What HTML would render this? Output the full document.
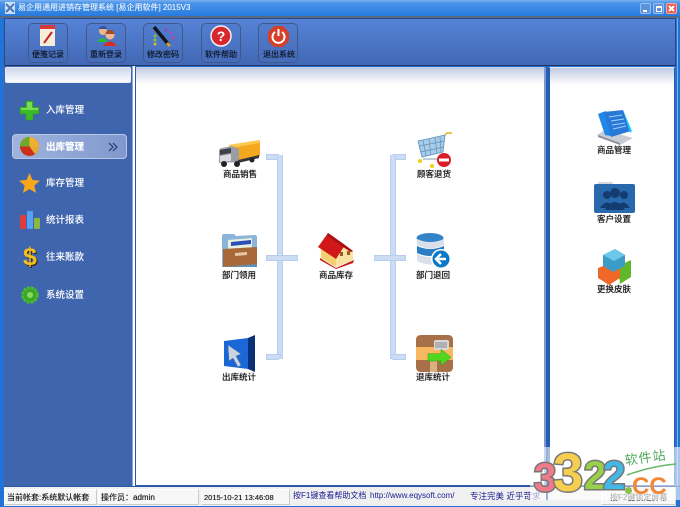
<!DOCTYPE html>
<html lang="zh"><head><meta charset="utf-8"><title>易企用通用进销存管理系统</title>
<style>
*{box-sizing:border-box}
html,body{margin:0;padding:0}
body{width:680px;height:507px;position:relative;overflow:hidden;background:#2174d6;font-family:"Liberation Sans","Noto Sans CJK SC",sans-serif;font-size:9px;color:#111}
.a{position:absolute}
.t{position:absolute;white-space:nowrap;line-height:12px}
.c{text-align:center;width:60px;font-size:8.5px;color:#111;text-shadow:0 0 .6px #111}
.s{color:#fff;font-size:9.5px;left:46px;text-shadow:0 0 .5px #fff}
.tb{position:absolute;top:23px;width:40px;height:40px;border:1px solid #41588c;border-radius:5px;background:rgba(80,115,190,.25)}
.tl{position:absolute;top:49px;font-size:8px;color:#101828;width:44px;text-align:center;white-space:nowrap;line-height:12px;text-shadow:0 0 .5px #101828}
.b{position:absolute;background:#cbdcf4;border:1px solid #b9cdec}
.cell{position:absolute;top:489px;height:16px;background:#f7f7f7;border:1px solid #fff;border-right-color:#ccc;border-bottom-color:#ccc;font-size:8px;line-height:15px;padding-left:2px;white-space:nowrap;color:#222;text-shadow:0 0 .4px #222}
.n{position:absolute;font-family:"Liberation Sans";font-weight:700;-webkit-text-stroke:3px #777;paint-order:stroke fill;white-space:nowrap}
svg{position:absolute;overflow:visible}
</style></head><body>
<!-- title bar -->
<div class="a" style="left:0;top:0;width:680px;height:17px;background:linear-gradient(#7fb2ef 0,#4a94e8 3px,#2479de 100%)"></div>
<div class="a" style="left:0;top:16px;width:680px;height:2px;background:#5a6a80"></div>
<svg style="left:5px;top:2px" width="10" height="12"><rect width="10" height="12" fill="#cfe0f5"/><path d="M1 2l8 8M9 2l-8 8" stroke="#4a78b8" stroke-width="2"/></svg>
<div class="t" style="left:18px;top:2px;font-size:8px;color:#e8f0fb;text-shadow:0 0 .5px #e8f0fb">易企用通用进销存管理系统 [易企用软件] 2015V3</div>
<div class="a" style="left:640px;top:3px;width:11px;height:11px;background:#5b93dc;border:1px solid #9cc0ee;border-radius:2px"></div>
<div class="a" style="left:643px;top:10px;width:4px;height:2px;background:#fff"></div>
<div class="a" style="left:653px;top:3px;width:11px;height:11px;background:#5b93dc;border:1px solid #9cc0ee;border-radius:2px"></div>
<div class="a" style="left:656px;top:6px;width:6px;height:6px;border:1px solid #fff;border-top-width:2px"></div>
<div class="a" style="left:666px;top:3px;width:11px;height:11px;background:#ee5a50;border:1px solid #f4a8a0;border-radius:2px"></div>
<svg style="left:666px;top:3px" width="11" height="11"><path d="M3 3l5 5M8 3l-5 5" stroke="#fff" stroke-width="2"/></svg>
<!-- header -->
<div class="a" style="left:4px;top:18px;width:672px;height:48px;background:linear-gradient(#5683d7,#4268b4);border:1px solid #234a90;border-bottom-color:#1c3668"></div>
<div class="a" style="left:677px;top:18px;width:1px;height:470px;background:#7fb0ea"></div>
<!-- toolbar -->
<div class="tb" style="left:28px"></div><div class="tb" style="left:86px"></div><div class="tb" style="left:143px"></div><div class="tb" style="left:201px"></div><div class="tb" style="left:258px"></div>
<div class="tl" style="left:26px">便笺记录</div><div class="tl" style="left:84px">重新登录</div><div class="tl" style="left:141px">修改密码</div><div class="tl" style="left:199px">软件帮助</div><div class="tl" style="left:257px">退出系统</div>
<svg style="left:40px;top:25px" width="16" height="22"><rect width="15" height="21" fill="#f6edd8"/><rect width="15" height="4" fill="#d83a3a"/><path d="M4 18L12 7" stroke="#c8202a" stroke-width="2"/></svg>
<svg style="left:96px;top:26px" width="22" height="21"><circle cx="7" cy="5" r="4" fill="#e8b890"/><path d="M3 3a4 3 0 018 0z" fill="#3a4f9a"/><path d="M1 16q6-8 11 0z" fill="#28b83a"/><circle cx="14" cy="9" r="4.5" fill="#f0b890"/><path d="M9.500 8a4.500 4 0 019 0z" fill="#a84a28"/><path d="M7 20q7-9 14 0z" fill="#d82c24"/></svg>
<svg style="left:152px;top:26px" width="24" height="22"><path d="M2 1L17 19" stroke="#10141c" stroke-width="3.500"/><path d="M15 17l3 3" stroke="#d8a030" stroke-width="3"/><circle cx="3" cy="10" r="1.500" fill="#8ac030"/><circle cx="3" cy="14" r="1.500" fill="#8ac030"/><circle cx="3" cy="18" r="1.500" fill="#d0c030"/><circle cx="14" cy="4" r="1.500" fill="#a040c0"/><circle cx="19" cy="7" r="1.500" fill="#a050c8"/><circle cx="21" cy="12" r="1.500" fill="#c040a0"/></svg>
<svg style="left:210px;top:25px" width="22" height="22"><circle cx="11" cy="11" r="10" fill="#d8262e" stroke="#f4f0f0" stroke-width="1.500"/><text x="11" y="16" text-anchor="middle" font-size="14" font-weight="700" fill="#fff" font-family="Liberation Sans">?</text></svg>
<svg style="left:268px;top:26px" width="21" height="21"><path d="M6 0h9l6 6v9l-6 6H6l-6-6V6z" fill="#d4402a"/><path d="M7 6a6 6 0 107 0" fill="none" stroke="#fff" stroke-width="2"/><path d="M10.500 3v7" stroke="#fff" stroke-width="2"/></svg>
<!-- panels -->
<div class="a" style="left:4px;top:66px;width:129px;height:421px;background:#3f65ae;border-right:1px solid #8aa4d6"></div>
<div class="a" style="left:5px;top:67px;width:126px;height:16px;background:linear-gradient(#cdd7ea,#fbfcfe);border:1px solid #e8eef8;border-radius:2px"></div>
<div class="a" style="left:133px;top:66px;width:2px;height:421px;background:#fff"></div>
<div class="a" style="left:135px;top:67px;width:411px;height:419px;background:linear-gradient(#c0cbe2,#fff 17px);border-right:2px solid #7e98cc;border-left:1px solid #2c58a8;border-bottom:1px solid #2c58a8"></div>
<div class="a" style="left:546px;top:66px;width:3px;height:421px;background:#2360b8"></div>
<div class="a" style="left:549px;top:67px;width:126px;height:419px;background:linear-gradient(#c0cbe2,#fff 17px);border:1px solid #2c58a8;border-top:1px solid #e8eef8"></div>
<!-- sidebar -->
<div class="a" style="left:12px;top:134px;width:115px;height:25px;background:linear-gradient(90deg,#9fb4dc,#8098ce);border:1px solid #b8c8e6;border-radius:4px"></div>
<div class="t s" style="top:105px">入库管理</div>
<div class="t s" style="top:142px;font-weight:700">出库管理</div>
<div class="t s" style="top:178px">库存管理</div>
<div class="t s" style="top:215px">统计报表</div>
<div class="t s" style="top:252px">往来账款</div>
<div class="t s" style="top:290px">系统设置</div>
<svg style="left:108px;top:142px" width="10" height="10"><path d="M1 1l4 4-4 4M5 1l4 4-4 4" fill="none" stroke="#203a78" stroke-width="1.200"/></svg>
<svg style="left:20px;top:101px" width="19" height="19"><path d="M6 0h7v6h6v7h-6v6H6v-6H0V6h6z" fill="#3cb828" stroke="#2a9020" stroke-width=".5"/><path d="M7 1h5v6h6v2H1V7h6z" fill="#78de50"/></svg>
<svg style="left:20px;top:137px" width="19" height="19"><circle cx="9.500" cy="9.500" r="9.500" fill="#cc3018"/><path d="M9.500 9.500V0A9.500 9.500 0 0119 9.500z" fill="#f0b030"/><path d="M9.500 9.500V0A9.500 9.500 0 000 9.500z" fill="#70a828"/><path d="M9.500 9.500H19a9.500 9.500 0 01-4 7.800z" fill="#e8a838"/></svg>
<svg style="left:19px;top:173px" width="21" height="20"><path d="M10.500 0l3 7 7.500.6-5.700 5 1.800 7.400-6.600-4-6.600 4 1.800-7.400L0 7.600 7.500 7z" fill="#f8a818"/></svg>
<svg style="left:20px;top:210px" width="20" height="20"><rect y="5" width="6" height="14" rx="1" fill="#e03c40"/><rect x="7" y="1" width="6" height="18" rx="1" fill="#5aa0f0"/><rect x="14" y="8" width="6" height="11" rx="1" fill="#88b840"/></svg>
<div class="t" style="left:23px;top:245px;font-size:25px;line-height:25px;font-weight:700;color:#f4c020;font-family:'Liberation Sans';text-shadow:1px 1px 0 #302008">$</div>
<svg style="left:21px;top:286px" width="18" height="18"><circle cx="9" cy="9" r="7.500" fill="#3ca828" stroke="#4cba34" stroke-width="2.500" stroke-dasharray="3 1"/><circle cx="9" cy="9" r="3" fill="#88d860"/></svg>
<!-- brackets -->
<div class="b" style="left:266px;top:154px;width:15px;height:6px;border-radius:0 4px 0 0"></div>
<div class="b" style="left:277px;top:155px;width:6px;height:204px;border-width:0 1px"></div>
<div class="b" style="left:266px;top:354px;width:15px;height:6px;border-radius:0 0 4px 0"></div>
<div class="b" style="left:266px;top:255px;width:32px;height:6px"></div>
<div class="b" style="left:390px;top:154px;width:16px;height:6px;border-radius:4px 0 0 0"></div>
<div class="b" style="left:390px;top:155px;width:6px;height:204px;border-width:0 1px"></div>
<div class="b" style="left:390px;top:354px;width:16px;height:6px;border-radius:0 0 0 4px"></div>
<div class="b" style="left:374px;top:255px;width:32px;height:6px"></div>
<!-- center icons -->
<svg style="left:219px;top:140px" width="42" height="28"><path d="M10 5L41 0v16L14 21z" fill="#f4a820"/><path d="M10 5L41 0v3L11 8z" fill="#fcc850"/><path d="M0 11q0-3 3-3l10-2 7 3v13l-20 1z" fill="#9a9ea4"/><path d="M1 10l11-2v5l-11 2z" fill="#3c4048"/><path d="M1 16l11-2v7l-11 1z" fill="#d8dade"/><path d="M19 20l21-5v3l-21 5z" fill="#34383e"/><circle cx="5" cy="24" r="3" fill="#202226"/><circle cx="18" cy="24" r="3" fill="#202226"/><circle cx="33" cy="20" r="2.500" fill="#202226"/></svg>
<div class="t c" style="left:210px;top:168px">商品销售</div>
<svg style="left:221px;top:233px" width="38" height="36"><path d="M1 34V3q0-2 2-2h10l2 2 19-1q2 0 2 2v29z" fill="#8ab4d8"/><path d="M7 7l24-2v14H7z" fill="#e8f0e0"/><path d="M10 9l20-2v4l-20 2z" fill="#2a50b8"/><path d="M2 16l34-2v18L2 34z" fill="#a8683a"/><path d="M14 20l12-1v3l-12 1z" fill="#e8c8a0"/><path d="M1 34l35-3v3z" fill="#5e90b8"/></svg>
<div class="t c" style="left:209px;top:269px">部门领用</div>
<svg style="left:223px;top:335px" width="33" height="37"><path d="M1 6L25 3v31L1 31z" fill="#1a68d8"/><path d="M25 3l7-3v37l-7-3z" fill="#0a3078"/><path d="M5 10l13 9-5 2 5 9-3 2-5-9-4 3z" fill="#c8d4e4" stroke="#5a6a80" stroke-width=".5"/></svg>
<div class="t c" style="left:209px;top:371px">出库统计</div>
<svg style="left:318px;top:233px" width="37" height="36"><path d="M2 25l16 10 18-8-1 3-17 6-16-9z" fill="#c81818"/><path d="M3 16l15 10v8L3 25z" fill="#f4d070"/><path d="M18 26l9-14 8 6v9l-17 7z" fill="#f8e4a0"/><path d="M10 0L0 14l18 12 9-14z" fill="#d01818"/><path d="M10 0l17 12 8 6-2 1-8-5L9 2z" fill="#a80e0e"/><rect x="22" y="19" width="3" height="4" fill="#a05828"/><rect x="29" y="18" width="3" height="4" fill="#a05828"/></svg>
<div class="t c" style="left:306px;top:269px">商品库存</div>
<svg style="left:417px;top:132px" width="36" height="36"><path d="M1 9L28 3 26 20 5 25z" fill="#a8cce8" stroke="#5e90b8" stroke-width=".8"/><path d="M6 8l3 16M12 7l2 16M18 6l2 15M23 5l1 15M3 14l24-5M4 20l22-5" stroke="#5e90b8" stroke-width=".7" fill="none"/><path d="M28 3l2-2h5" stroke="#e0b020" stroke-width="1.500" fill="none"/><path d="M6 27h17" stroke="#9ab0c8" stroke-width="1.200"/><circle cx="3" cy="29" r="2" fill="#f0d010"/><circle cx="15" cy="34" r="2" fill="#f0d010"/><circle cx="27" cy="28" r="7" fill="#d81c28"/><rect x="22" y="26.500" width="10" height="3" fill="#fff"/></svg>
<div class="t c" style="left:404px;top:168px">顾客退货</div>
<svg style="left:416px;top:233px" width="36" height="36"><ellipse cx="14" cy="5" rx="13.500" ry="5" fill="#3484c8"/><path d="M1 6v6q13 7 27 0V6q-14 6-27 0z" fill="#d8e0ea"/><path d="M1 13v7q13 6 27 0v-7q-14 6-27 0z" fill="#2a7cc4"/><path d="M1 21v7q13 7 27 0v-7q-14 6-27 0z" fill="#d8e0ea"/><circle cx="25" cy="26" r="10" fill="#fff"/><circle cx="25" cy="26" r="8.500" fill="#0a78c8"/><path d="M30 26h-9M25 21l-5 5 5 5" fill="none" stroke="#fff" stroke-width="2.500"/></svg>
<div class="t c" style="left:403px;top:269px">部门退回</div>
<svg style="left:416px;top:335px" width="37" height="37"><rect width="37" height="37" rx="5" fill="#f8b860"/><path d="M0 5q0-5 5-5h27q5 0 5 5v7H0zM0 25h37v7q0 5-5 5H5q-5 0-5-5z" fill="#a87048"/><rect x="14" y="25" width="7" height="12" fill="#d8b080"/><rect x="18" y="5" width="15" height="10" rx="2" fill="#d8d8d8"/><path d="M20 7v6M22 7v6M24 7v6M26 7v6M28 7v6M30 7v6" stroke="#777" stroke-width=".8"/><path d="M12 22h13v-5l10 9-10 9v-5H12z" fill="#50d820" stroke="#2a9a10" stroke-width=".5" transform="translate(0 -1) scale(1 .9)"/></svg>
<div class="t c" style="left:403px;top:371px">退库统计</div>
<!-- right icons -->
<svg style="left:596px;top:110px" width="38" height="35"><path d="M1 25L9 20l28 8-13 7z" fill="#c8ccd4"/><path d="M2 27l22 8v-2L2 25z" fill="#8a8e98"/><path d="M2 4l5-2 8 24-6-1zM5 3l5-2 8 24-6-1z" fill="#2088e8"/><path d="M8 2l19-2 8 21-20 6z" fill="#2878d8"/><path d="M13 7l13-2M15 11l13-2M16 15l13-2M17 19l13-3" stroke="#a0d0f8" stroke-width="1"/><path d="M27 0l9 21-2 2z" fill="#20c8f8"/></svg>
<div class="t c" style="left:584px;top:144px">商品管理</div>
<svg style="left:594px;top:181px" width="41" height="33"><path d="M4 1h14l2 3h-16z" fill="#d4d8e0"/><rect y="3" width="41" height="29" rx="2" fill="#2868ac"/><circle cx="13" cy="14" r="4" fill="#143c70"/><circle cx="30" cy="14" r="4" fill="#143c70"/><circle cx="21" cy="12" r="5" fill="#143c70"/><path d="M6 27q7-11 14 0zM22 27q7-11 14 0zM11 29q10-16 20 0z" fill="#143c70"/></svg>
<div class="t c" style="left:584px;top:213px">客户设置</div>
<svg style="left:598px;top:248px" width="34" height="37"><path d="M20 18l13-6v17l-11 7z" fill="#60b828"/><path d="M0 20l10-4 12 5v9l-11 7-11-7z" fill="#f06828"/><path d="M5 7l12-6 10 6v11l-12 6-10-6z" fill="#3c9cc8"/><path d="M5 7l12-6 10 6-11 6z" fill="#6cc8e8"/></svg>
<div class="t c" style="left:584px;top:283px">更换皮肤</div>
<!-- status bar -->
<div class="a" style="left:4px;top:487px;width:672px;height:19px;background:#f0f0f0"></div>
<div class="a" style="left:4px;top:486px;width:672px;height:1px;background:#2c58a8"></div>
<div class="cell" style="left:4px;width:93px">当前帐套:系统默认帐套</div>
<div class="cell" style="left:98px;width:101px">操作员：admin</div>
<div class="cell" style="left:201px;width:89px;font-size:7.5px">2015-10-21 13:46:08</div>
<div class="t" style="left:293px;top:490px;color:#1a1a90;font-size:8px">按F1键查看帮助文档</div>
<div class="t" style="left:370px;top:490px;color:#1a1a90;font-size:8px">http://www.eqysoft.com/</div>
<div class="t" style="left:470px;top:490px;color:#1a1a90;font-size:8.5px">专注完美 近乎苛求</div>
<div class="cell" style="left:601px;width:75px;color:#555;padding-left:8px">按F2键锁定屏幕</div>
<!-- watermark -->
<div class="a" style="left:530px;top:447px;width:150px;height:53px;background:rgba(255,255,255,.6)"></div>
<div class="a" style="left:530px;top:486px;width:150px;height:1px;background:#8aa0cc"></div>
<div class="a" style="left:546px;top:447px;width:2px;height:53px;background:#9ab0d8"></div>
<div class="n" style="left:534px;top:458px;font-size:40px;line-height:40px;color:#f07a8a">3</div>
<div class="n" style="left:584px;top:456px;font-size:40px;line-height:40px;color:#98d048">2</div>
<div class="n" style="left:603px;top:456px;font-size:40px;line-height:40px;color:#40b8e8">2</div>
<div class="n" style="left:553px;top:446px;font-size:54px;line-height:54px;color:#f6cf50">3</div>
<div class="a" style="left:625px;top:487px;width:7px;height:7px;border-radius:50%;background:#8ac048"></div>
<div class="t" style="left:632px;top:475px;font:700 24px/24px 'Liberation Sans';color:#f08838">CC</div>
<div class="t" style="left:626px;top:453px;font-size:13px;line-height:16px;letter-spacing:1px;color:#4ea858;transform:rotate(-8deg);transform-origin:0 100%">软件站</div>
<svg style="left:627px;top:463px" width="50" height="14"><path d="M0 12Q25 3 49 1" stroke="#68b868" stroke-width="1.500" fill="none"/></svg>
</body></html>
